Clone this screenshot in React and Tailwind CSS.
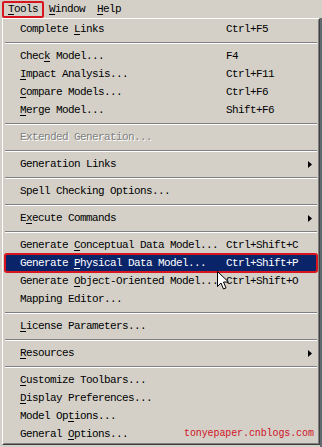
import React from "react";

const items = [
  { label: "Complete Links", key: 9, shortcut: "Ctrl+F5" },
  "sep",
  { label: "Check Model...", key: 4, shortcut: "F4" },
  { label: "Impact Analysis...", key: 0, shortcut: "Ctrl+F11" },
  { label: "Compare Models...", key: 0, shortcut: "Ctrl+F6" },
  { label: "Merge Model...", key: 0, shortcut: "Shift+F6" },
  "sep",
  { label: "Extended Generation...", disabled: true },
  "sep",
  { label: "Generation Links", sub: true },
  "sep",
  { label: "Spell Checking Options..." },
  "sep",
  { label: "Execute Commands", key: 1, sub: true },
  "sep",
  { label: "Generate Conceptual Data Model...", key: 9, shortcut: "Ctrl+Shift+C" },
  { label: "Generate Physical Data Model...", key: 9, shortcut: "Ctrl+Shift+P", active: true },
  { label: "Generate Object-Oriented Model...", key: 9, shortcut: "Ctrl+Shift+O" },
  { label: "Mapping Editor..." },
  "sep",
  { label: "License Parameters...", key: 0 },
  "sep",
  { label: "Resources", key: 0, sub: true },
  "sep",
  { label: "Customize Toolbars...", key: 0 },
  { label: "Display Preferences...", key: 0 },
  { label: "Model Options...", key: 8 },
  { label: "General Options...", key: 8 },
];

// underline the mnemonic letter
const Label = ({ text, k }) => {
  if (k === undefined) return <span>{text}</span>;
  return (
    <span>
      {text.slice(0, k)}
      <span className="underline underline-offset-2">{text[k]}</span>
      {text.slice(k + 1)}
    </span>
  );
};

const Arrow = ({ white }) => (
  <svg width="4" height="7" viewBox="0 0 4 7" className="ml-auto mr-[6px]">
    <path d="M0 0 L4 3.5 L0 7 Z" fill={white ? "#fff" : "#000"} />
  </svg>
);

const MenuRow = ({ item }) => {
  if (item.disabled) {
    return (
      <div className="h-[18px] flex items-center pl-[16px] text-[#808080] [text-shadow:1px_1px_0_#fff]">
        {item.label}
      </div>
    );
  }
  return (
    <div
      className={`relative h-[18px] flex items-center ${
        item.active ? "bg-[#0a246a] text-white mx-[2px] pl-[14px]" : "pl-[16px]"
      }`}
    >
      <div className="w-[206px] shrink-0 whitespace-nowrap">
        <Label text={item.label} k={item.key} />
      </div>
      {item.shortcut && <div className="whitespace-nowrap">{item.shortcut}</div>}
      {item.sub && <Arrow />}
      {item.active && (
        <span className="absolute -inset-x-[2px] -inset-y-[1px] border-2 border-[#d8141e] rounded-[3px]" />
      )}
    </div>
  );
};

const Separator = () => (
  <div className="h-[9px] flex flex-col justify-center px-[1px]">
    <div className="h-px bg-[#808080]" />
    <div className="h-px bg-white" />
  </div>
);

const App = () => {
  return (
    <div className="relative w-[322px] h-[447px] overflow-hidden bg-[#d4d0c8] text-black text-[11px] tracking-[-0.6px] font-['Liberation_Mono',monospace]">
      {/* menu bar */}
      <div className="h-[18px] flex items-center pl-[2px]">
        <div className="h-[17px] px-[4px] flex items-center border-2 border-[#d8141e] rounded-[2px]">
          <Label text="Tools" k={0} />
        </div>
        <div className="pl-[5px] pr-[6px]">
          <Label text="Window" k={0} />
        </div>
        <div className="pl-[6px]">
          <Label text="Help" k={0} />
        </div>
      </div>

      <div className="flex">
        {/* dropdown */}
        <div className="ml-[2px] w-[318px] h-[427px] border border-t-white border-l-white border-r-[#404040] border-b-[#404040]">
          <div className="h-full border border-t-[#d4d0c8] border-l-[#d4d0c8] border-r-[#808080] border-b-[#808080] flex flex-col">
            {items.map((it, i) =>
              it === "sep" ? <Separator key={i} /> : <MenuRow key={i} item={it} />
            )}
          </div>
        </div>
        <div className="w-[2px] h-[429px] bg-[#5f6b70]" />
      </div>

      {/* mouse pointer */}
      <svg width="13" height="20" viewBox="0 0 13 20" className="absolute left-[217px] top-[271px]">
        <path
          d="M0.5 0.5 L0.5 15.5 L4 12 L6.5 18 L9 17 L6.5 11 L11.5 11 Z"
          fill="#fff"
          stroke="#000"
          strokeWidth="1"
        />
      </svg>

      {/* watermark */}
      <div className="absolute left-[184px] top-[426px] text-[10px] tracking-[-0.1px] text-[#d01026]">
        tonyepaper.cnblogs.com
      </div>
    </div>
  );
};

export default App;
